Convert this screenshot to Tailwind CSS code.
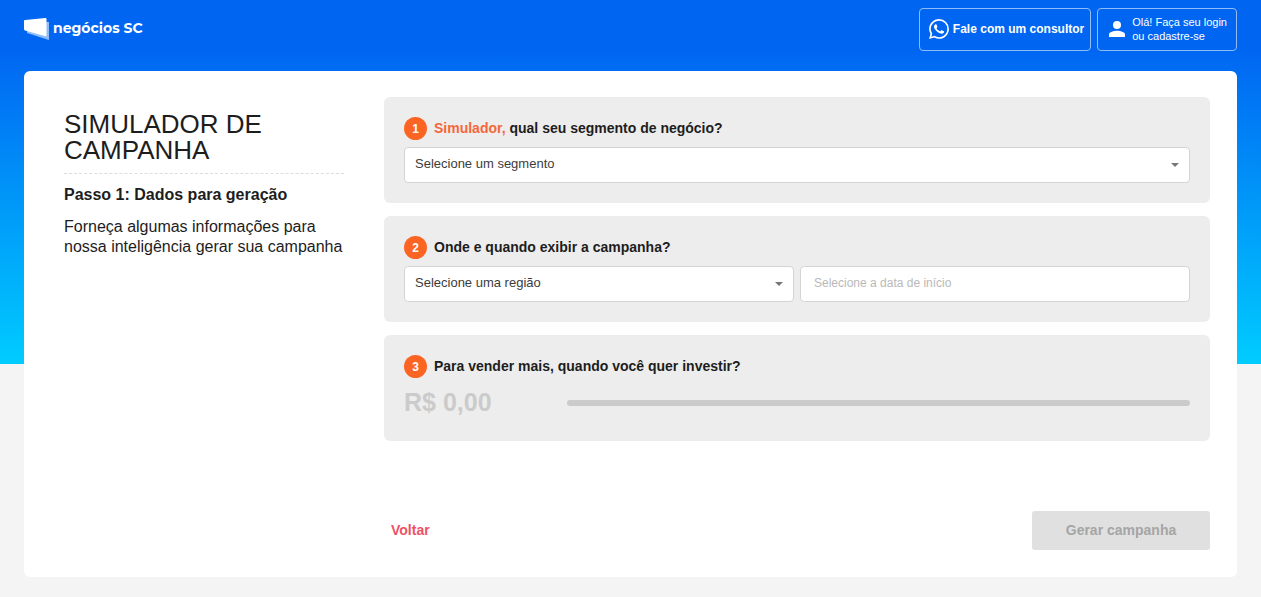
<!DOCTYPE html>
<html lang="pt-BR">
<head>
<meta charset="utf-8">
<meta name="viewport" content="width=device-width, initial-scale=1">
<title>Simulador de campanha</title>
<script src="https://cdn.jsdelivr.net/npm/@tailwindcss/browser@4"></script>
</head>
<body class="min-h-screen bg-[#f4f4f4] bg-[linear-gradient(#0066f2_50px,#00ccff_364px)] bg-[length:100%_364px] bg-no-repeat px-6 pb-5 font-['Liberation_Sans',Arial,sans-serif] text-[#1d1d1d]">
  <header class="flex items-start justify-between pt-2 pb-5">
    <a href="#" class="mt-2 flex items-center gap-1 text-white">
      <svg class="h-6 w-[25px]" viewBox="0 0 25 24" aria-hidden="true">
        <path d="M3 5 L25 6 V24 L3 17Z" fill="#8fbdf9"/>
        <path d="M1 4 L21.500 2 Q22.500 2 22.500 3 V19.500 Q22.500 20.500 21.500 20.200 L1 14.500 Q0 14 0 13 V5 Q0 4 1 4Z" fill="#fff"/>
      </svg>
      <span class="font-['Montserrat','Inter',sans-serif] text-sm font-bold">negócios SC</span>
    </a>
    <nav class="flex gap-[6px] text-white">
      <a href="#" class="flex h-[43px] items-center gap-1 rounded-sm border border-[#8fbdf9] pr-[6px] pb-[2px] pl-[9px] text-[12px] font-bold">
        <svg class="size-5" viewBox="0 0 24 24" fill="#fff" aria-hidden="true"><path d="M17.472 14.382c-.297-.149-1.758-.867-2.030-.967-.273-.099-.471-.148-.670.150-.197.297-.767.966-.940 1.164-.173.199-.347.223-.644.075-.297-.150-1.255-.463-2.390-1.475-.883-.788-1.480-1.761-1.653-2.059-.173-.297-.018-.458.130-.606.134-.133.298-.347.446-.520.149-.174.198-.298.298-.497.099-.198.050-.371-.025-.520-.075-.149-.669-1.612-.916-2.207-.242-.579-.487-.500-.669-.510-.173-.008-.371-.010-.570-.010-.198 0-.520.074-.792.372-.272.297-1.040 1.016-1.040 2.479 0 1.462 1.065 2.875 1.213 3.074.149.198 2.096 3.200 5.077 4.487.709.306 1.262.489 1.694.625.712.227 1.360.195 1.871.118.571-.085 1.758-.719 2.006-1.413.248-.694.248-1.289.173-1.413-.074-.124-.272-.198-.570-.347m-5.421 7.403h-.004a9.870 9.870 0 01-5.031-1.378l-.361-.214-3.741.982.998-3.648-.235-.374a9.860 9.860 0 01-1.510-5.260c.001-5.450 4.436-9.884 9.888-9.884 2.640 0 5.122 1.030 6.988 2.898a9.825 9.825 0 012.893 6.994c-.003 5.450-4.437 9.884-9.885 9.884m8.413-18.297A11.815 11.815 0 0012.050 0C5.495 0 .160 5.335.157 11.892c0 2.096.547 4.142 1.588 5.945L.057 24l6.305-1.654a11.882 11.882 0 005.683 1.448h.005c6.554 0 11.890-5.335 11.893-11.893a11.821 11.821 0 00-3.480-8.413z"/></svg>
        Fale com um consultor
      </a>
      <a href="#" class="flex h-[43px] items-center gap-[7px] rounded-sm border border-[#8fbdf9] pr-[9px] pb-[2px] pl-[11px] text-[11px] leading-[14px]">
        <svg class="h-4 w-4" viewBox="0 0 16 16" fill="#fff" aria-hidden="true"><circle cx="8" cy="4" r="4"/><path d="M0 16v-2.500C0 11 5 9.800 8 9.800s8 1.200 8 3.700V16z"/></svg>
        <span>Olá! Faça seu login<br>ou cadastre-se</span>
      </a>
    </nav>
  </header>

  <main class="flex rounded-md bg-white pt-[26px] pr-[27px] pb-[27px] pl-10">
    <section class="mr-10 w-[280px] shrink-0 pt-[14px]">
      <h1 class="border-b border-dashed border-[#dddddd] pb-[10px] text-[26px] leading-[26px]">SIMULADOR DE CAMPANHA</h1>
      <h2 class="mt-[11px] text-[16px] leading-5 font-bold">Passo 1: Dados para geração</h2>
      <p class="mt-3 text-[16px] leading-5">Forneça algumas informações para nossa inteligência gerar sua campanha</p>
    </section>

    <form class="flex min-w-0 flex-1 flex-col gap-[13px]">
      <section class="h-[106px] rounded-md bg-[#ededed] px-5 pt-5">
        <label for="segmento" class="flex items-center gap-[7px] text-[14px] font-bold">
          <span class="flex size-[23px] items-center justify-center rounded-full bg-[#fc6424] text-[12px] text-white">1</span>
          <span><span class="text-[#f5673a]">Simulador,</span> qual seu segmento de negócio?</span>
        </label>
        <div class="relative mt-[7px]">
          <select id="segmento" class="h-9 w-full appearance-none rounded-sm border border-[#d4d4d4] bg-white px-[10px] pb-[2px] text-[13px] text-[#3c3c3c]"><option>Selecione um segmento</option></select>
          <svg class="pointer-events-none absolute top-4 right-[11px] h-1 w-2" viewBox="0 0 8 4" fill="#777777" aria-hidden="true"><path d="M0 0h8L4 4z"/></svg>
        </div>
      </section>

      <section class="h-[106px] rounded-md bg-[#ededed] px-5 pt-5">
        <label for="regiao" class="flex items-center gap-[7px] text-[14px] font-bold">
          <span class="flex size-[23px] items-center justify-center rounded-full bg-[#fc6424] text-[12px] text-white">2</span>
          <span>Onde e quando exibir a campanha?</span>
        </label>
        <div class="mt-[7px] grid grid-cols-2 gap-[6px]">
          <div class="relative">
            <select id="regiao" class="h-9 w-full appearance-none rounded-sm border border-[#d4d4d4] bg-white px-[10px] pb-[2px] text-[13px] text-[#3c3c3c]"><option>Selecione uma região</option></select>
            <svg class="pointer-events-none absolute top-4 right-[11px] h-1 w-2" viewBox="0 0 8 4" fill="#777777" aria-hidden="true"><path d="M0 0h8L4 4z"/></svg>
          </div>
          <input type="text" aria-label="Data de início" placeholder="Selecione a data de início" class="h-9 w-full rounded-sm border border-[#d4d4d4] bg-white px-[13px] pb-[2px] text-[12px] placeholder:text-[#b9b9b9]">
        </div>
      </section>

      <section class="h-[106px] rounded-md bg-[#ededed] px-5 pt-5">
        <label for="valor" class="flex items-center gap-[7px] text-[14px] font-bold">
          <span class="flex size-[23px] items-center justify-center rounded-full bg-[#fc6424] text-[12px] text-white">3</span>
          <span>Para vender mais, quando você quer investir?</span>
        </label>
        <div class="mt-[7px] flex items-center">
          <output for="valor" class="w-[163px] shrink-0 text-[25px] leading-[35px] font-bold text-[#cbcbcb]">R$ 0,00</output>
          <input id="valor" type="range" min="0" max="100" value="0" disabled class="h-[6px] min-w-0 flex-1 appearance-none rounded-full bg-[#cbcbcb] [&::-webkit-slider-thumb]:appearance-none">
        </div>
      </section>

      <div class="mt-[57px] flex items-center justify-between">
        <button type="button" class="px-[7px] text-[14px] font-bold text-[#ee5266]">Voltar</button>
        <button type="submit" disabled class="h-[39px] w-[178px] rounded-[3px] bg-[#e0e0e0] text-[14px] font-bold text-[#a5a5a5]">Gerar campanha</button>
      </div>
    </form>
  </main>
</body>
</html>
